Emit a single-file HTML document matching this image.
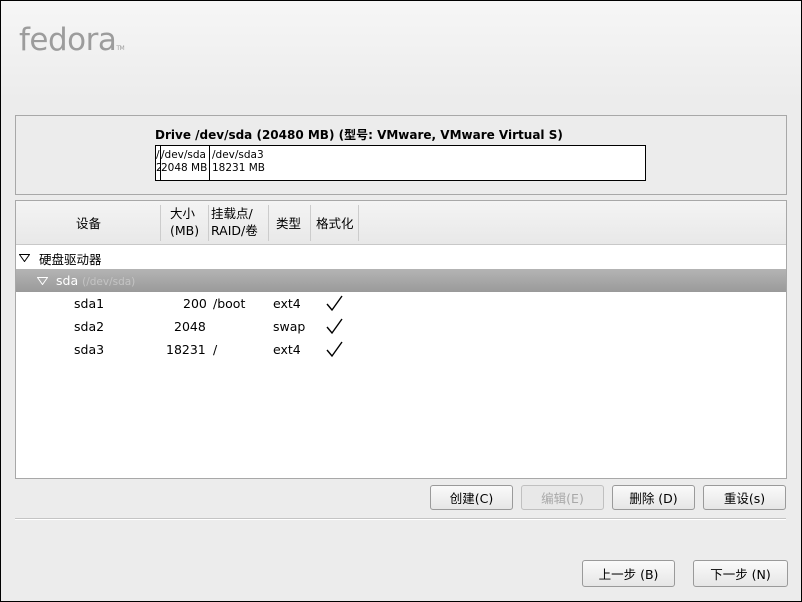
<!DOCTYPE html><html><head><style>
body{margin:0;width:802px;height:602px;overflow:hidden;font-family:"DejaVu Sans","Noto Sans CJK SC",sans-serif;font-size:12.5px}
#w{position:absolute;left:0;top:0;width:800px;height:600px;border:1px solid #000;background:linear-gradient(#f6f6f6,#ececec 100px,#ececec)}
.a{position:absolute}
.btn{position:absolute;height:25px;border:1px solid #9a9a9a;border-radius:3px;background:linear-gradient(#fafafa,#e6e6e6);text-align:center;line-height:25px;font-size:12.5px;color:#000;box-sizing:border-box}
</style></head><body><div id="w">
<div class="a" style="left:18px;top:21px;font-size:31px;color:#9c9c9c;font-family:'DejaVu Sans',sans-serif;letter-spacing:-0.5px">fedora<span style="font-size:6px">TM</span></div>
<div class="a" style="left:14px;top:114px;width:770px;height:78px;border:1px solid #a8a8a8;background:#ececec"></div>
<div class="a" style="left:154px;top:125px;font-weight:bold;font-size:12px">Drive /dev/sda (20480 MB) (型号: VMware, VMware Virtual S)</div>
<div class="a" style="left:154px;top:144px;width:489px;height:34px;border:1px solid #000;background:#fff;font-size:10.5px;line-height:13px;overflow:hidden">
<div class="a" style="left:0;top:0;width:4px;overflow:hidden;border-right:1px solid #000;height:31px;padding-top:3px">/<br>2</div>
<div class="a" style="left:5px;top:0;width:48px;height:31px;padding-top:3px;border-right:1px solid #000;overflow:hidden;white-space:nowrap">/dev/sda<br>2048 MB</div>
<div class="a" style="left:56px;top:0;padding-top:3px;white-space:nowrap">/dev/sda3<br>18231 MB</div>
</div>
<div class="a" style="left:14px;top:199px;width:770px;height:277px;border:1px solid #a8a8a8;background:#fff;overflow:hidden">
<div class="a" style="left:0;top:0;width:770px;height:43px;background:linear-gradient(#f4f4f4,#e8e8e8);border-bottom:1px solid #c8c8c8"></div>
<div class="a" style="left:144px;top:4px;height:36px;border-left:1px solid #ccc"></div>
<div class="a" style="left:192px;top:4px;height:36px;border-left:1px solid #ccc"></div>
<div class="a" style="left:252px;top:4px;height:36px;border-left:1px solid #ccc"></div>
<div class="a" style="left:294px;top:4px;height:36px;border-left:1px solid #ccc"></div>
<div class="a" style="left:342px;top:4px;height:36px;border-left:1px solid #ccc"></div>
<div class="a" style="left:60px;top:12px">设备</div>
<div class="a" style="left:154px;top:4px;line-height:17px">大小<br>(MB)</div>
<div class="a" style="left:195px;top:4px;line-height:17px">挂载点/<br>RAID/卷</div>
<div class="a" style="left:260px;top:12px">类型</div>
<div class="a" style="left:300px;top:12px">格式化</div>
<svg class="a" style="left:3px;top:53px" width="11" height="8"><path d="M0.5 0.5H10.5L5.5 7.5Z" fill="none" stroke="#000"/></svg>
<div class="a" style="left:23px;top:48px">硬盘驱动器</div>
<div class="a" style="left:0;top:68px;width:770px;height:23px;background:linear-gradient(#b4b4b4,#9a9a9a)"></div>
<svg class="a" style="left:21px;top:76px" width="11" height="8"><path d="M0.5 0.5H10.5L5.5 7.5Z" fill="none" stroke="#fff"/></svg>
<div class="a" style="left:40px;top:72px;color:#fff">sda <span style="color:#c4c4c4;font-size:10.5px">(/dev/sda)</span></div>
<div class="a" style="left:58px;top:95px">sda1</div><div class="a" style="left:167px;top:95px">200</div><div class="a" style="left:197px;top:95px">/boot</div><div class="a" style="left:257px;top:95px">ext4</div>
<div class="a" style="left:58px;top:118px">sda2</div><div class="a" style="left:158px;top:118px">2048</div><div class="a" style="left:257px;top:118px">swap</div>
<div class="a" style="left:58px;top:141px">sda3</div><div class="a" style="left:150px;top:141px">18231</div><div class="a" style="left:197px;top:141px">/</div><div class="a" style="left:257px;top:141px">ext4</div>
<svg class="a" style="left:310px;top:94px" width="18" height="70"><g fill="none" stroke="#000" stroke-width="1.4"><path d="M1 9L6 15L16 1"/><path d="M1 32L6 38L16 24"/><path d="M1 55L6 61L16 47"/></g></svg>
</div>
<div class="btn" style="left:429px;top:484px;width:83px">创建(C)</div>
<div class="btn" style="left:520px;top:484px;width:83px;color:#a8a8a8;border-color:#c0c0c0;background:#e8e8e8">编辑(E)</div>
<div class="btn" style="left:611px;top:484px;width:83px">删除 (D)</div>
<div class="btn" style="left:702px;top:484px;width:83px">重设(s)</div>
<div class="a" style="left:14px;top:517px;width:771px;border-top:1px solid #c4c4c4;border-bottom:1px solid #fff"></div>
<div class="btn" style="left:581px;top:559px;width:93px;height:27px;line-height:27px">上一步 (B)</div>
<div class="btn" style="left:692px;top:559px;width:95px;height:27px;line-height:27px">下一步 (N)</div>
</div></body></html>
